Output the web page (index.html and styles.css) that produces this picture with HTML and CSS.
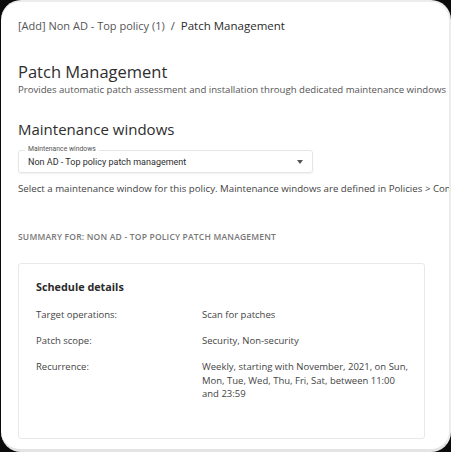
FILE: index.html
```html
<!DOCTYPE html>
<html>
<head>
<meta charset="utf-8">
<link rel="stylesheet" href="styles.css">
</head>
<body>
<div class="frame">
  <div class="crumbs"><span class="crumb-parent">[Add] Non AD - Top policy (1)</span><span class="crumb-sep">/</span><span class="crumb-current">Patch Management</span></div>
  <h1 class="title">Patch Management</h1>
  <p class="desc">Provides automatic patch assessment and installation through dedicated maintenance windows</p>
  <h2 class="subtitle">Maintenance windows</h2>
  <div class="select">
    <span class="select-label">Maintenance windows</span>
    <span class="select-value">Non AD - Top policy patch management</span>
    <span class="select-arrow"></span>
  </div>
  <p class="helper">Select a maintenance window for this policy. Maintenance windows are defined in Policies &gt; Configuration</p>
  <div class="summary">SUMMARY FOR: NON AD - TOP POLICY PATCH MANAGEMENT</div>
  <div class="card">
    <div class="card-title">Schedule details</div>
    <div class="rows">
      <div class="row"><div class="key">Target operations:</div><div class="val">Scan for patches</div></div>
      <div class="row"><div class="key">Patch scope:</div><div class="val">Security, Non-security</div></div>
      <div class="row"><div class="key">Recurrence:</div><div class="val">Weekly, starting with November, 2021, on Sun,<br>Mon, Tue, Wed, Thu, Fri, Sat, between 11:00<br>and 23:59</div></div>
    </div>
  </div>
</div>
</body>
</html>
```
FILE: styles.css
```css
html, body {
  margin: 0;
  padding: 0;
  background: #0b0b0b;
  width: 451px;
  height: 452px;
  overflow: hidden;
}
.frame {
  box-sizing: border-box;
  margin-left: 1px;
  width: 450px;
  height: 452px;
  background: #fff;
  border-top: 2px solid #ececec;
  border-right: 2px solid #ececec;
  border-bottom: 3px solid #e4e4e4;
  border-radius: 20px;
  padding: 17px 0 0 17px;
  overflow: hidden;
  white-space: nowrap;
  font-family: "Open Sans", "Liberation Sans", sans-serif;
  color: #333;
}
.crumbs {
  font-size: 11px;
  line-height: 14px;
  height: 14px;
  color: #555;
}
.crumb-sep {
  margin: 0 6px 0 6px;
  color: #444;
}
.crumb-current {
  color: #2b2b2b;
  font-weight: 500;
  font-size: 11.5px;
}
.title {
  margin: 29px 0 0;
  font-size: 16.5px;
  line-height: 20px;
  font-weight: 500;
  color: #2e2e2e;
}
.desc {
  margin: 2px 0 0;
  font-size: 9.6px;
  line-height: 12px;
  color: #555;
}
.subtitle {
  margin: 23px 0 0;
  font-size: 15px;
  line-height: 20px;
  font-weight: 500;
  color: #2e2e2e;
}
.select {
  position: relative;
  box-sizing: border-box;
  margin-top: 11px;
  width: 295px;
  height: 23px;
  border: 1px solid #e6e6e6;
  border-radius: 3px;
  box-shadow: 0 1px 2px rgba(0,0,0,0.06);
  display: flex;
  align-items: center;
  padding: 0 9px;
  font-family: Roboto, "Noto Sans", sans-serif;
}
.select-label {
  position: absolute;
  top: -6px;
  left: 6px;
  padding: 0 3px;
  background: #fff;
  font-size: 6.8px;
  line-height: 8px;
  color: #555;
}
.select-value {
  flex: 1;
  font-size: 9px;
  line-height: 12px;
  color: #2e2e2e;
}
.select-arrow {
  width: 0;
  height: 0;
  border-left: 3.5px solid transparent;
  border-right: 3.5px solid transparent;
  border-top: 4px solid #555;
}
.helper {
  margin: 10px 0 0;
  font-size: 9.7px;
  line-height: 12px;
  color: #444;
}
.summary {
  margin-top: 37px;
  font-size: 8.5px;
  line-height: 10px;
  font-weight: 600;
  color: #777;
  letter-spacing: 0.2px;
}
.card {
  box-sizing: border-box;
  margin-top: 21px;
  width: 407px;
  height: 176px;
  border: 1px solid #e8e8e8;
  border-radius: 3px;
  padding: 16px 17px 0;
}
.card-title {
  font-size: 10.8px;
  line-height: 14px;
  font-weight: 700;
  color: #2b2b2b;
}
.rows {
  margin-top: 14px;
  display: flex;
  flex-direction: column;
  gap: 12.5px;
}
.row {
  display: flex;
  font-size: 9.5px;
  line-height: 13.5px;
  color: #444;
}
.key {
  width: 166px;
  flex: none;
}
.val {
  flex: none;
}
```
